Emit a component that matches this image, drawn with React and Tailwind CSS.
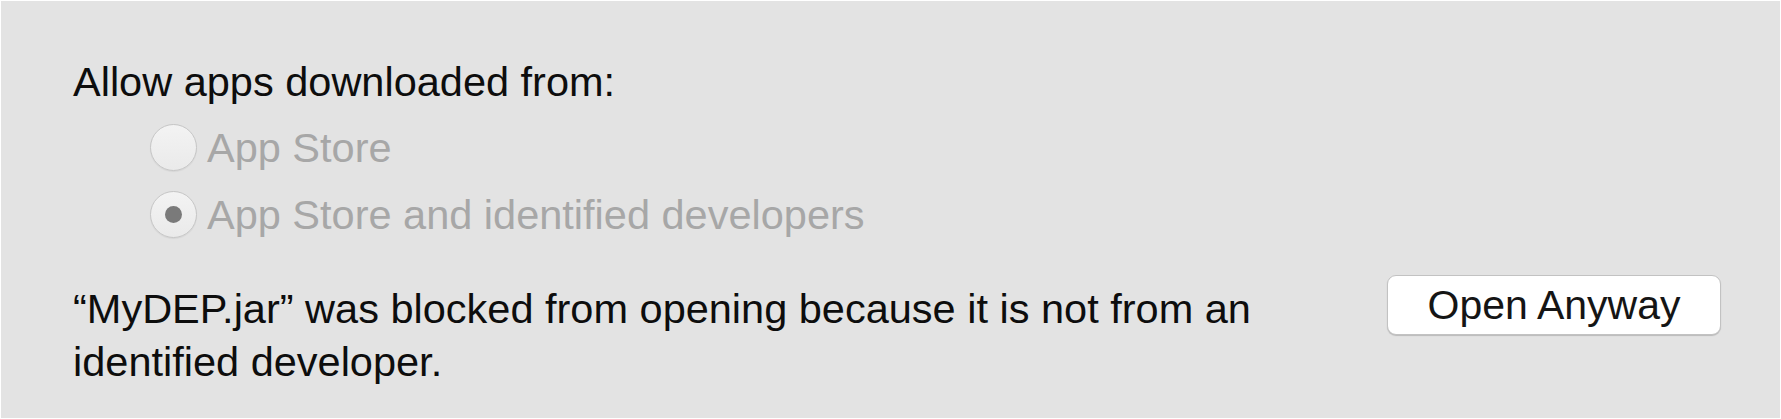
export default function App() {
  const font = { fontFamily: '"Liberation Sans", Arial, sans-serif' };
  return (
    <div
      className="w-[1781px] h-[419px] bg-white p-px box-border"
      style={font}
    >
      <div className="w-full h-full bg-[#e3e3e3] pl-[72px] pr-[59px] pt-[57px] box-border">
        <div className="text-[41.5px] leading-[48px] text-[#0d0d0d]">Allow apps downloaded from:</div>
        <div className="mt-[8px] pl-[77px] flex flex-col">
          <div className="h-[67px] flex items-center gap-[10px]">
            <span className="w-[47px] h-[47px] rounded-full border border-[#c6c6c6] bg-gradient-to-b from-[#f3f3f3] to-[#eaeaea] shadow-[0_1px_1px_rgba(0,0,0,0.06)] box-border" />
            <span className="text-[41.5px] leading-[48px] text-[#a7a7a7]">App Store</span>
          </div>
          <div className="h-[67px] flex items-center gap-[10px]">
            <span className="w-[47px] h-[47px] rounded-full border border-[#c6c6c6] bg-gradient-to-b from-[#f3f3f3] to-[#eaeaea] shadow-[0_1px_1px_rgba(0,0,0,0.06)] box-border flex items-center justify-center">
              <span className="w-[17px] h-[17px] rounded-full bg-[#7a7a7a]" />
            </span>
            <span className="text-[41.5px] leading-[48px] text-[#a7a7a7]">App Store and identified developers</span>
          </div>
        </div>
        <div className="mt-[34px] flex items-start justify-between">
          <p className="text-[41.5px] leading-[53px] text-[#0d0d0d]">
            “MyDEP.jar” was blocked from opening because it is not from an
            <br />
            identified developer.
          </p>
          <button className="mt-[-7px] w-[334px] h-[60px] rounded-[9px] bg-white border border-[#c2c2c2] shadow-[0_1px_1px_rgba(0,0,0,0.18)] text-[41px] leading-none text-[#151515] flex items-center justify-center box-border">
            Open Anyway
          </button>
        </div>
      </div>
    </div>
  );
}
